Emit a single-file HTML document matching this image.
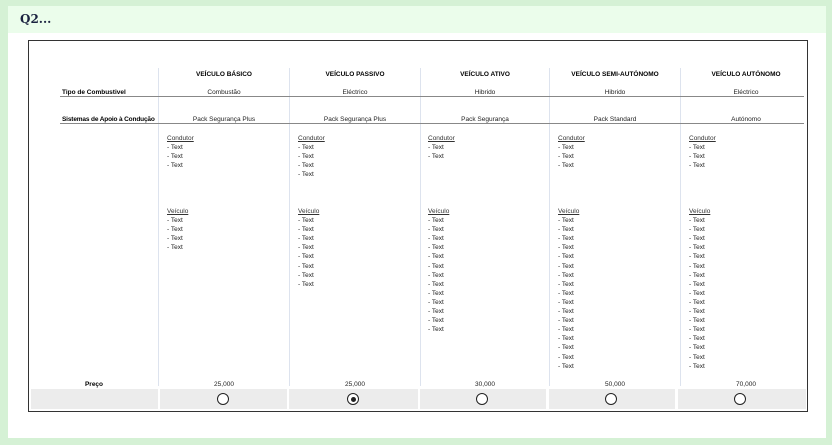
<!DOCTYPE html>
<html><head><meta charset="utf-8"><style>
*{margin:0;padding:0;box-sizing:border-box}
body{width:832px;height:445px;background:#d5f1d5;font-family:"Liberation Sans",sans-serif;position:relative;overflow:hidden}
.panel{position:absolute;left:8px;top:6px;width:818px;height:432px;background:#fff}
.hdr{position:absolute;left:8px;top:6px;width:818px;height:27px;background:#ebfdeb}
.q{position:absolute;left:20px;top:12px;font-family:"DejaVu Serif",serif;font-weight:bold;font-size:12px;color:#1b2340}
.box{position:absolute;left:28px;top:40px;width:780px;height:372px;border:1px solid #333}
.a{position:absolute;font-size:6.5px;color:#222;white-space:nowrap}
.b{font-weight:bold;color:#000}
.c{text-align:center;width:128px}
.sep{position:absolute;top:68px;width:1px;height:318px;background:#dde3ee}
.line{position:absolute;left:60px;width:744px;height:1px;background:#888}
.gray{position:absolute;top:389px;height:20px;background:#ececec}
.rad{position:absolute;top:393px;width:12px;height:12px;border:1px solid #222;border-radius:50%;background:#fff}
.rad.on::after{content:"";position:absolute;left:2.5px;top:2.5px;width:5px;height:5px;border-radius:50%;background:#222}
.list{position:absolute;font-size:6.5px;line-height:9.1px;color:#222}
.list u{color:#333}
</style></head><body>
<div class="panel"></div><div class="hdr"></div>
<div class="q">Q2...</div>
<div class="box"></div>
<div class="sep" style="left:158px"></div><div class="sep" style="left:289px"></div><div class="sep" style="left:420px"></div><div class="sep" style="left:549px"></div><div class="sep" style="left:680px"></div>
<div class="line" style="top:96px"></div><div class="line" style="top:123px"></div>
<div class="a b" style="left:62px;top:89px">Tipo de Combustivel</div>
<div class="a b" style="left:62px;top:116px;letter-spacing:-0.15px">Sistemas de Apoio à Condução</div>
<div class="a b c" style="left:30px;top:381px">Preço</div>

<div class="a b c" style="left:160px;top:71px">VEÍCULO BÁSICO</div>
<div class="a b c" style="left:291px;top:71px">VEÍCULO PASSIVO</div>
<div class="a b c" style="left:421px;top:71px">VEÍCULO ATIVO</div>
<div class="a b c" style="left:551px;top:71px">VEÍCULO SEMI-AUTÓNOMO</div>
<div class="a b c" style="left:682px;top:71px">VEÍCULO AUTÓNOMO</div>

<div class="a c" style="left:160px;top:89px">Combustão</div>
<div class="a c" style="left:291px;top:89px">Eléctrico</div>
<div class="a c" style="left:421px;top:89px">Hibrido</div>
<div class="a c" style="left:551px;top:89px">Hibrido</div>
<div class="a c" style="left:682px;top:89px">Eléctrico</div>

<div class="a c" style="left:160px;top:116px">Pack Segurança Plus</div>
<div class="a c" style="left:291px;top:116px">Pack Segurança Plus</div>
<div class="a c" style="left:421px;top:116px">Pack Segurança</div>
<div class="a c" style="left:551px;top:116px">Pack Standard</div>
<div class="a c" style="left:682px;top:116px">Autónomo</div>

<div class="list" style="left:167px;top:134px"><u>Condutor</u><br>- Text<br>- Text<br>- Text</div>
<div class="list" style="left:298px;top:134px"><u>Condutor</u><br>- Text<br>- Text<br>- Text<br>- Text</div>
<div class="list" style="left:428px;top:134px"><u>Condutor</u><br>- Text<br>- Text</div>
<div class="list" style="left:558px;top:134px"><u>Condutor</u><br>- Text<br>- Text<br>- Text</div>
<div class="list" style="left:689px;top:134px"><u>Condutor</u><br>- Text<br>- Text<br>- Text</div>

<div class="list" style="left:167px;top:207px"><u>Veículo</u><br>- Text<br>- Text<br>- Text<br>- Text</div>
<div class="list" style="left:298px;top:207px"><u>Veículo</u><br>- Text<br>- Text<br>- Text<br>- Text<br>- Text<br>- Text<br>- Text<br>- Text</div>
<div class="list" style="left:428px;top:207px"><u>Veículo</u><br>- Text<br>- Text<br>- Text<br>- Text<br>- Text<br>- Text<br>- Text<br>- Text<br>- Text<br>- Text<br>- Text<br>- Text<br>- Text</div>
<div class="list" style="left:558px;top:207px"><u>Veículo</u><br>- Text<br>- Text<br>- Text<br>- Text<br>- Text<br>- Text<br>- Text<br>- Text<br>- Text<br>- Text<br>- Text<br>- Text<br>- Text<br>- Text<br>- Text<br>- Text<br>- Text</div>
<div class="list" style="left:689px;top:207px"><u>Veículo</u><br>- Text<br>- Text<br>- Text<br>- Text<br>- Text<br>- Text<br>- Text<br>- Text<br>- Text<br>- Text<br>- Text<br>- Text<br>- Text<br>- Text<br>- Text<br>- Text<br>- Text</div>

<div class="a c" style="left:160px;top:381px">25,000</div>
<div class="a c" style="left:291px;top:381px">25,000</div>
<div class="a c" style="left:421px;top:381px">30,000</div>
<div class="a c" style="left:551px;top:381px">50,000</div>
<div class="a c" style="left:682px;top:381px">70,000</div>

<div class="gray" style="left:31px;width:127px"></div>
<div class="gray" style="left:160px;width:127px"></div>
<div class="gray" style="left:289px;width:129px"></div>
<div class="gray" style="left:420px;width:126px"></div>
<div class="gray" style="left:549px;width:126px"></div>
<div class="gray" style="left:678px;width:128px"></div>
<div class="rad" style="left:217px"></div>
<div class="rad on" style="left:347px"></div>
<div class="rad" style="left:476px"></div>
<div class="rad" style="left:605px"></div>
<div class="rad" style="left:734px"></div>
</body></html>
